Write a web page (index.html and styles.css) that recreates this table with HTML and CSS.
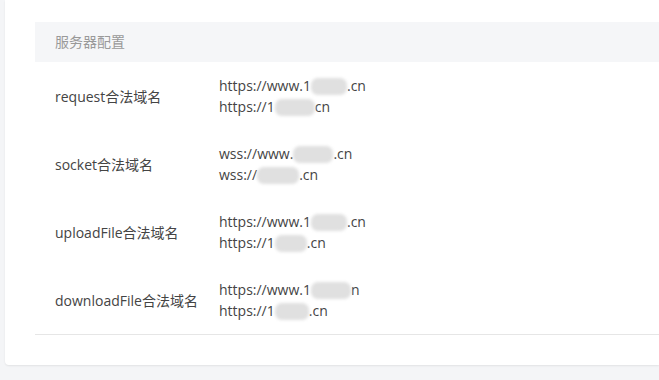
FILE: index.html
```html
<!DOCTYPE html>
<html lang="zh-CN">
<head>
<meta charset="utf-8">
<link rel="stylesheet" href="styles.css">
</head>
<body>
<div class="card">
  <div class="table">
    <div class="thead">服务器配置</div>
    <div class="row">
      <div class="label">request合法域名</div>
      <div class="values">
        <div>https://www.1<span class="mask" style="width:36px"></span>.cn</div>
        <div>https://1<span class="mask" style="width:40px"></span>cn</div>
      </div>
    </div>
    <div class="row">
      <div class="label">socket合法域名</div>
      <div class="values">
        <div>wss://www.<span class="mask" style="width:40px"></span>.cn</div>
        <div>wss://<span class="mask" style="width:42px"></span>.cn</div>
      </div>
    </div>
    <div class="row">
      <div class="label">uploadFile合法域名</div>
      <div class="values">
        <div>https://www.1<span class="mask" style="width:36px"></span>.cn</div>
        <div>https://1<span class="mask" style="width:32px"></span>.cn</div>
      </div>
    </div>
    <div class="row">
      <div class="label">downloadFile合法域名</div>
      <div class="values">
        <div>https://www.1<span class="mask" style="width:40px"></span>n</div>
        <div>https://1<span class="mask" style="width:34px"></span>.cn</div>
      </div>
    </div>
  </div>
</div>
</body>
</html>
```
FILE: styles.css
```css
html, body {
  margin: 0;
  padding: 0;
}
body {
  background: #f4f5f7;
  width: 659px;
  height: 380px;
  overflow: hidden;
  font-family: "Open Sans", "Noto Sans CJK SC", sans-serif;
  font-size: 14px;
  color: #333;
}
.card {
  margin-left: 5px;
  width: 654px;
  height: 365px;
  box-sizing: border-box;
  background: #fff;
  border-radius: 0 0 0 4px;
  box-shadow: 0 1px 2px rgba(0,0,0,0.08);
  padding: 22px 0 0 30px;
}
.thead {
  height: 40px;
  line-height: 40px;
  background: #f5f6f8;
  color: #999;
  padding-left: 20px;
}
.table {
  border-bottom: 1px solid #e6e6e6;
}
.row {
  display: flex;
  align-items: center;
  height: 68px;
}
.label {
  width: 164px;
  padding-left: 20px;
  color: #444;
}
.values {
  line-height: 21px;
  color: #444;
}
.mask {
  display: inline-block;
  height: 17px;
  vertical-align: -4px;
  background: #e0e0e0;
  border-radius: 7px;
  filter: blur(1.5px);
}
```
